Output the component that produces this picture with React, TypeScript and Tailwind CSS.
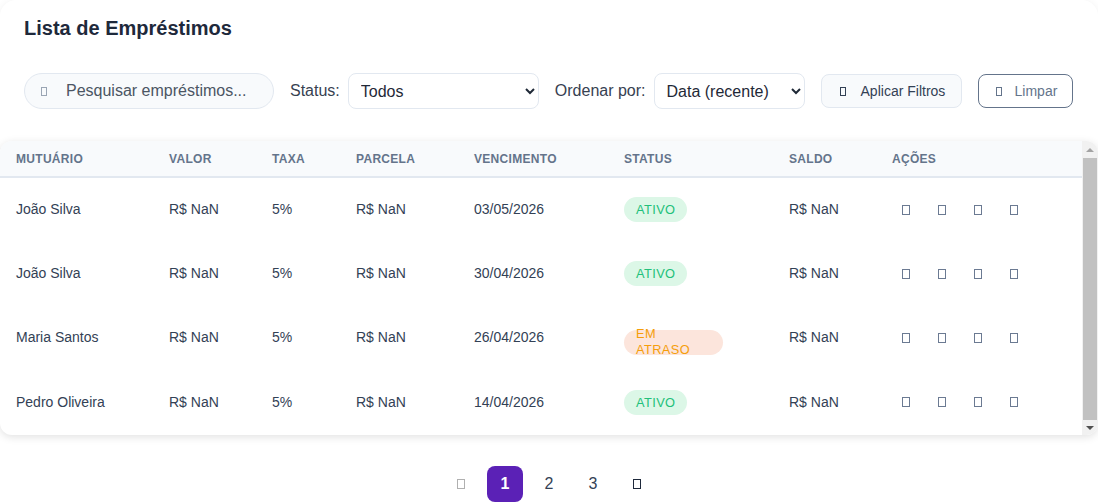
import React from "react";

type Loan = {
  name: string;
  value: string;
  rate: string;
  installment: string;
  due: string;
  status: "ativo" | "atraso";
  balance: string;
};

const loans: Loan[] = [
  { name: "João Silva", value: "R$ NaN", rate: "5%", installment: "R$ NaN", due: "03/05/2026", status: "ativo", balance: "R$ NaN" },
  { name: "João Silva", value: "R$ NaN", rate: "5%", installment: "R$ NaN", due: "30/04/2026", status: "ativo", balance: "R$ NaN" },
  { name: "Maria Santos", value: "R$ NaN", rate: "5%", installment: "R$ NaN", due: "26/04/2026", status: "atraso", balance: "R$ NaN" },
  { name: "Pedro Oliveira", value: "R$ NaN", rate: "5%", installment: "R$ NaN", due: "14/04/2026", status: "ativo", balance: "R$ NaN" },
];

// missing icon font glyph (rendered as an empty box)
const Tofu = ({ className }: { className: string }) => (
  <span className={`inline-block border ${className}`} />
);

const StatusBadge = ({ status }: { status: Loan["status"] }) => {
  if (status === "ativo") {
    return (
      <span className="inline-block rounded-full bg-[#dcf7e7] px-3 py-[4px] text-[12.8px] leading-[17px] font-medium tracking-[0.4px] text-[#22c07a]">
        ATIVO
      </span>
    );
  }
  return (
    <span className="mt-[9px] flex h-[25px] w-[99px] items-center rounded-full bg-[#fce5dc] pl-3">
      <span className="block w-[60px] text-[12.8px] leading-[16.5px] font-medium tracking-[0.4px] text-[#f59e0b]">
        EM ATRASO
      </span>
    </span>
  );
};

const headers = [
  { label: "Mutuário", w: "w-[153px]" },
  { label: "Valor", w: "w-[103px]" },
  { label: "Taxa", w: "w-[84px]" },
  { label: "Parcela", w: "w-[118px]" },
  { label: "Vencimento", w: "w-[150px]" },
  { label: "Status", w: "w-[165px]" },
  { label: "Saldo", w: "w-[103px]" },
  { label: "Ações", w: "" },
];

// classic scrollbar look (the browser here draws none)
const FakeScrollbar = () => (
  <div className="flex w-[16px] shrink-0 flex-col items-center bg-[#f1f1f1]">
    <div className="flex h-[15px] items-center justify-center pt-[2px]">
      <span className="h-0 w-0 border-x-[4px] border-b-[4px] border-x-transparent border-b-[#a3a3a3]" />
    </div>
    <div className="mt-[2px] w-[14px] flex-1 bg-[#c1c1c1]" />
    <div className="flex h-[15px] items-center justify-center">
      <span className="h-0 w-0 border-x-[4px] border-t-[4px] border-x-transparent border-t-[#505050]" />
    </div>
  </div>
);

export default function App() {
  return (
    <div className="min-h-screen bg-white font-['Liberation_Sans',Arial,sans-serif]">
      <div className="rounded-2xl bg-white pb-10 shadow-[0_1px_8px_rgba(0,0,0,0.06)]">
        <div className="px-6 pt-[14px]">
          <h2 className="text-[20px] leading-[28px] font-bold text-[#1e293b]">
            Lista de Empréstimos
          </h2>

          <div className="mt-[31px] flex h-[36px] items-center gap-4">
            <div className="flex h-[36px] w-[250px] items-center rounded-full border border-[#e2e8f0] bg-[#f8fafc] pl-4">
              <Tofu className="h-[9px] w-[6px] border-[#9aa5b4]" />
              <input
                className="ml-[19px] w-[180px] bg-transparent text-[16px] text-[#334155] outline-none placeholder:text-[#4b5563]"
                placeholder="Pesquisar empréstimos..."
              />
            </div>

            <div className="flex items-center gap-2">
              <span className="text-[16px] text-[#374151]">Status:</span>
              <select className="h-[36px] w-[191px] rounded-lg border border-[#e2e8f0] bg-white pl-2 pr-1 text-[16px] text-[#1f2937]">
                <option>Todos</option>
                <option>Ativo</option>
                <option>Em atraso</option>
              </select>
            </div>

            <div className="flex items-center gap-2">
              <span className="text-[16px] text-[#374151]">Ordenar por:</span>
              <select className="h-[36px] w-[151px] rounded-lg border border-[#e2e8f0] bg-white pl-2 pr-1 text-[16px] text-[#1f2937]">
                <option>Data (recente)</option>
                <option>Data (antiga)</option>
              </select>
            </div>

            <button className="flex h-[34px] w-[141px] items-center rounded-lg border border-[#e2e8f0] bg-[#f8fafc] pl-[18px] text-[14px] text-[#334155]">
              <Tofu className="h-[9px] w-[6px] border-[#334155]" />
              <span className="ml-[15px]">Aplicar Filtros</span>
            </button>

            <button className="flex h-[34px] w-[95px] items-center rounded-lg border border-[#64748b] bg-white pl-[17px] text-[14px] text-[#64748b]">
              <Tofu className="h-[9px] w-[6px] border-[#64748b]" />
              <span className="ml-[13px]">Limpar</span>
            </button>
          </div>
        </div>

        <div className="mt-[32px] flex h-[294px] overflow-hidden rounded-xl bg-white shadow-[0_2px_8px_rgba(0,0,0,0.12)]">
          <div className="min-w-0 flex-1">
            <table className="w-full table-fixed border-collapse">
              <thead>
                <tr className="h-[36px] border-b-2 border-[#e2e8f0] bg-[#f8fafc]">
                  {headers.map((h) => (
                    <th
                      key={h.label}
                      className={`${h.w} px-4 text-left text-[12px] font-bold uppercase tracking-wide text-[#64748b]`}
                    >
                      {h.label}
                    </th>
                  ))}
                </tr>
              </thead>
              <tbody>
                {loans.map((loan, i) => (
                  <tr key={i} className="h-[64.4px] text-[14px] text-[#334155]">
                    <td className="px-4">{loan.name}</td>
                    <td className="px-4">{loan.value}</td>
                    <td className="px-4">{loan.rate}</td>
                    <td className="px-4">{loan.installment}</td>
                    <td className="px-4">{loan.due}</td>
                    <td className="px-4">
                      <StatusBadge status={loan.status} />
                    </td>
                    <td className="px-4">{loan.balance}</td>
                    <td className="px-4">
                      <div className="flex gap-2">
                        {[0, 1, 2, 3].map((k) => (
                          <button key={k} className="flex h-7 w-7 items-center justify-center">
                            <Tofu className="h-[10px] w-[8px] border-[#6b7a92]" />
                          </button>
                        ))}
                      </div>
                    </td>
                  </tr>
                ))}
              </tbody>
            </table>
          </div>
          <FakeScrollbar />
        </div>

        <div className="mt-[31px] flex justify-center gap-2">
          <button className="flex h-9 w-9 items-center justify-center">
            <Tofu className="h-[10px] w-[8px] border-[#b0b0b0]" />
          </button>
          <button className="flex h-9 w-9 items-center justify-center rounded-lg bg-[#5b21b6] text-[16px] font-semibold text-white">
            1
          </button>
          <button className="flex h-9 w-9 items-center justify-center rounded-lg text-[16px] text-[#334155]">
            2
          </button>
          <button className="flex h-9 w-9 items-center justify-center rounded-lg text-[16px] text-[#334155]">
            3
          </button>
          <button className="flex h-9 w-9 items-center justify-center">
            <Tofu className="h-[10px] w-[8px] border-[#1e293b]" />
          </button>
        </div>
      </div>
    </div>
  );
}
